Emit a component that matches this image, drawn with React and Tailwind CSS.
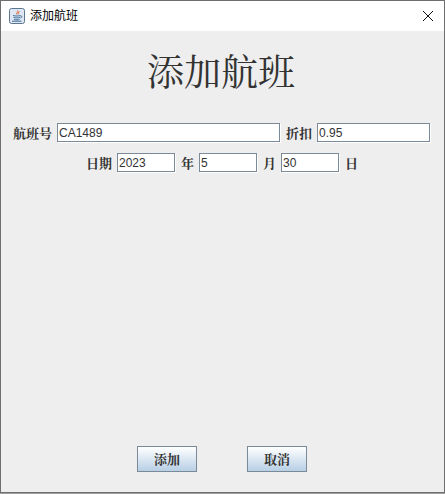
const uiFont = { fontFamily: '"Liberation Sans", "Noto Sans CJK SC", sans-serif' };
const serifFont = { fontFamily: '"Noto Serif CJK SC", "Liberation Serif", "Noto Sans CJK SC", serif' };

function Field({ value, className }) {
  return (
    <input
      readOnly
      value={value}
      className={`h-[19px] border border-[#7a8a99] bg-white px-[1px] text-[12px] text-[#333333] shadow-[1px_1px_0_#ffffff] outline-none ${className}`}
    />
  );
}

function Label({ children, className = "" }) {
  return (
    <span className={`text-[13px] leading-[19px] font-bold text-[#333333] ${className}`} style={serifFont}>
      {children}
    </span>
  );
}

function ActionButton({ children }) {
  return (
    <button
      className="h-[26px] w-[60px] border border-[#7a8a99] bg-gradient-to-b from-white to-[#b8cfe5] text-[13px] font-bold text-[#333333]"
      style={serifFont}
    >
      {children}
    </button>
  );
}

function JavaIcon() {
  return (
    <svg width="16" height="16" viewBox="0 0 16 16">
      <rect x="0.5" y="0.5" width="15" height="15" rx="2" fill="#dfe8f2" stroke="#5d7690" />
      <path d="M8.5 2.5c1.5 1.5-1.8 2.4-.6 4M10.5 3.5C9.5 4.5 9 5 9.6 6.2" fill="none" stroke="#d9531e" strokeWidth="1" />
      <path d="M4 7.5c2 .7 6 .7 7.5 0M4.5 9.5c2 .6 5 .6 6.5 0M5 11.5c2 .5 4 .5 5.5 0" fill="none" stroke="#3f6c9b" strokeWidth="1" />
      <path d="M11.5 8h1.2v1.4l-1.5.6" fill="none" stroke="#3f6c9b" strokeWidth="0.8" />
      <path d="M3 13.2h9.5" stroke="#3f6c9b" strokeWidth="1" />
    </svg>
  );
}

export default function App() {
  return (
    <div className="h-[494px] w-[445px] bg-[#a0a0a0]" style={uiFont}>
      <div className="flex h-[493px] flex-col border border-[#6f6f6f] bg-[#eeeeee]">
        <div className="flex h-[30px] shrink-0 items-center bg-white pr-[10px] pl-[8px]">
          <JavaIcon />
          <span className="ml-[5px] text-[12px] text-black">添加航班</span>
          <svg className="ml-auto" width="12" height="12" viewBox="0 0 12 12">
            <path d="M1 1l10 10M11 1L1 11" stroke="#111111" strokeWidth="1" />
          </svg>
        </div>

        <h1
          className="mt-[14px] h-[50px] pr-[3px] text-center text-[37px] leading-[50px] font-normal text-[#333333]"
          style={serifFont}
        >
          添加航班
        </h1>

        <div className="mt-[28px] flex justify-center gap-[5px] pr-[2px]">
          <Label>航班号</Label>
          <Field value="CA1489" className="w-[223px]" />
          <Label className="ml-[1px]">折扣</Label>
          <Field value="0.95" className="w-[113px]" />
        </div>

        <div className="mt-[11px] flex justify-center gap-[5px] pr-[1px]">
          <Label>日期</Label>
          <Field value="2023" className="w-[58px]" />
          <Label className="ml-[1px]">年</Label>
          <Field value="5" className="w-[58px]" />
          <Label className="ml-[1px]">月</Label>
          <Field value="30" className="w-[58px]" />
          <Label className="ml-[1px]">日</Label>
        </div>

        <div className="mt-auto mb-[20px] flex justify-center gap-[50px] pr-[1px]">
          <ActionButton>添加</ActionButton>
          <ActionButton>取消</ActionButton>
        </div>
      </div>
    </div>
  );
}
